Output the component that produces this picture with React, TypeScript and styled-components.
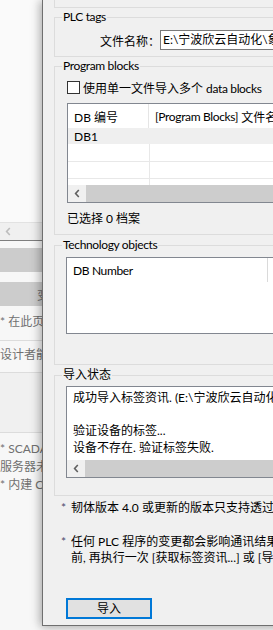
import styled, { createGlobalStyle } from 'styled-components';

const GlobalStyle = createGlobalStyle`
  html,
  body {
    margin: 0;
    overflow: hidden;
    background: #f7f7f7;
  }
  body {
    font-family: Lato, 'Noto Sans CJK SC', sans-serif;
    font-size: 12px;
    color: #000;
  }
`;

const Page = styled.div`
  display: flex;
  width: 273px;
  height: 630px;
  overflow: hidden;
`;

/* tighter tracking for runs of latin text */
const Latin = styled.span`
  letter-spacing: -0.35px;
`;

/* window behind the dialog */
const BackWindow = styled.div`
  width: 42px;
  flex-shrink: 0;
  display: flex;
  flex-direction: column;
  overflow: hidden;
  white-space: nowrap;
  color: #707070;
`;

const BackList = styled.div`
  height: 222px;
  flex-shrink: 0;
  background: #fafafa;
  border-bottom: 1px solid #e2e2e2;
`;

const BackScroll = styled.div`
  height: 17px;
  flex-shrink: 0;
  display: flex;
  align-items: center;
  padding-left: 5px;
  background: #f0f0f0;
  border-bottom: 1px solid #7e7e7e;
`;

const BackButton = styled.div<{ $mt: number }>`
  height: 24px;
  flex-shrink: 0;
  margin-top: ${({ $mt }) => $mt}px;
  display: flex;
  align-items: center;
  justify-content: flex-end;
  background: #cccccc;
  color: #6a6a6a;
  > span {
    margin-right: -7px;
  }
`;

const BackLine = styled.div<{ $mt: number; $h: number }>`
  height: ${({ $h }) => $h}px;
  flex-shrink: 0;
  margin-top: ${({ $mt }) => $mt}px;
  line-height: ${({ $h }) => $h}px;
`;

const BackRule = styled.div<{ $mt: number }>`
  height: 1px;
  flex-shrink: 0;
  margin-top: ${({ $mt }) => $mt}px;
  background: #dcdcdc;
`;

const BackPanel = styled.div`
  height: 59px;
  flex-shrink: 0;
  background: #f0f0f0;
`;

/* the import dialog */
const Dialog = styled.div`
  position: relative;
  z-index: 1;
  width: 480px;
  height: 626px;
  flex-shrink: 0;
  box-sizing: border-box;
  display: flex;
  flex-direction: column;
  padding-left: 11px;
  background: #f0f0f0;
  border-left: 1px solid #6f6f6f;
  border-bottom: 1px solid #6f6f6f;
  box-shadow: -3px 0 9px rgba(0, 0, 0, 0.22), 0 3px 8px rgba(0, 0, 0, 0.12);
  white-space: nowrap;
`;

const TopGroup = styled.div`
  width: 440px;
  height: 8px;
  flex-shrink: 0;
  box-sizing: border-box;
  border: 1px solid #dcdcdc;
  border-top: none;
`;

const Group = styled.section<{ $mt: number; $h: number }>`
  width: 440px;
  height: ${({ $h }) => $h}px;
  margin-top: ${({ $mt }) => $mt}px;
  flex-shrink: 0;
  box-sizing: border-box;
  display: flex;
  flex-direction: column;
  border: 1px solid #dcdcdc;
`;

const GroupTitle = styled.div`
  align-self: flex-start;
  height: 14px;
  line-height: 14px;
  margin: -8px 0 -6px 7px;
  padding: 0 1px;
  background: #f0f0f0;
`;

const FieldRow = styled.div`
  display: flex;
  align-items: center;
  padding: 12px 0 0 45px;
`;

const FieldLabel = styled.span`
  width: 60px;
  flex-shrink: 0;
`;

const TextInput = styled.div`
  width: 300px;
  height: 20px;
  box-sizing: border-box;
  padding-left: 2px;
  line-height: 18px;
  background: #fff;
  border: 1px solid #7a7a7a;
`;

const CheckRow = styled.label`
  display: flex;
  align-items: center;
  height: 13px;
  margin: 14px 0 0 12px;
`;

const CheckBox = styled.span`
  width: 13px;
  height: 13px;
  box-sizing: border-box;
  flex-shrink: 0;
  margin-right: 3px;
  background: #fff;
  border: 1px solid #333;
`;

const ListBox = styled.div<{ $mt: number; $ml: number; $h: number }>`
  width: 400px;
  height: ${({ $h }) => $h}px;
  margin: ${({ $mt, $ml }) => `${$mt}px 0 0 ${$ml}px`};
  flex-shrink: 0;
  box-sizing: border-box;
  display: flex;
  flex-direction: column;
  background: #fff;
  border: 1px solid #828790;
  overflow: hidden;
`;

const Rows = styled.div`
  flex: 1;
  overflow: hidden;
`;

const Row = styled.div<{ $h: number; $bg?: string; $line?: boolean }>`
  display: flex;
  height: ${({ $h }) => $h}px;
  box-sizing: border-box;
  background: ${({ $bg }) => $bg || '#fff'};
  border-bottom: ${({ $line }) => ($line ? '1px solid #e8e8e8' : 'none')};
`;

const Cell = styled.div<{ $w: number; $divider?: string }>`
  width: ${({ $w }) => $w}px;
  flex-shrink: 0;
  box-sizing: border-box;
  display: flex;
  align-items: center;
  padding-left: 6px;
  border-right: ${({ $divider }) => ($divider ? `1px solid ${$divider}` : 'none')};
`;

const HScroll = styled.div`
  height: 17px;
  flex-shrink: 0;
  display: flex;
  background: #f0f0f0;
`;

const ArrowButton = styled.div`
  width: 18px;
  flex-shrink: 0;
  display: flex;
  align-items: center;
  justify-content: center;
`;

const Thumb = styled.div`
  flex: 1;
  background: #cdcdcd;
`;

const Caption = styled.div`
  height: 16px;
  line-height: 16px;
  margin: 8px 0 0 12px;
`;

const StatusText = styled.div`
  flex: 1;
  padding: 3px 0 0 6px;
  line-height: 16.5px;
`;

const Note = styled.div<{ $mt: number }>`
  display: flex;
  margin-top: ${({ $mt }) => $mt}px;
  padding-left: 7px;
  line-height: 16px;
`;

const Star = styled.span`
  width: 10px;
  flex-shrink: 0;
  color: #4a4a6a;
`;

const ImportButton = styled.button`
  width: 86px;
  height: 21px;
  margin: 32px 0 0 12px;
  padding: 0;
  box-sizing: border-box;
  font: inherit;
  line-height: 17px;
  color: #000;
  background: #e1e1e1;
  border: 2px solid #0078d7;
  border-radius: 0;
`;

const Chevron = ({ color }: { color: string }) => (
  <svg width="6" height="9" viewBox="0 0 6 9">
    <path d="M4.8 1 L1.6 4.5 L4.8 8" fill="none" stroke={color} strokeWidth="1.6" />
  </svg>
);

const ScrollBar = () => (
  <HScroll>
    <ArrowButton>
      <Chevron color="#606060" />
    </ArrowButton>
    <Thumb />
  </HScroll>
);

export default function App() {
  return (
    <Page>
      <GlobalStyle />
      <BackWindow>
        <BackList />
        <BackScroll>
          <Chevron color="#bdbdbd" />
        </BackScroll>
        <BackButton $mt={7} />
        <BackButton $mt={10}>
          <span>变</span>
        </BackButton>
        <BackLine $mt={8} $h={16}>* 在此页</BackLine>
        <BackRule $mt={10} />
        <BackLine $mt={6} $h={16}>设计者能</BackLine>
        <BackRule $mt={9} />
        <BackPanel />
        <BackRule $mt={0} />
        <BackLine $mt={7} $h={18}>* SCADA</BackLine>
        <BackLine $mt={0} $h={18}>服务器未</BackLine>
        <BackLine $mt={0} $h={18}>* 内建 C</BackLine>
      </BackWindow>

      <Dialog>
        <TopGroup />

        <Group $mt={9} $h={40}>
          <GroupTitle>
            <Latin>PLC tags</Latin>
          </GroupTitle>
          <FieldRow>
            <FieldLabel>文件名称：</FieldLabel>
            <TextInput>E:\宁波欣云自动化\象山项目\PLC\tags.xml</TextInput>
          </FieldRow>
        </Group>

        <Group $mt={9} $h={169}>
          <GroupTitle>
            <Latin>Program blocks</Latin>
          </GroupTitle>
          <CheckRow>
            <CheckBox />
            <span>
              使用单一文件导入多个 <Latin>data blocks</Latin>
            </span>
          </CheckRow>
          <ListBox $mt={9} $ml={12} $h={100}>
            <Rows>
              <Row $h={24}>
                <Cell $w={81} $divider="#e5e5e5">DB 编号</Cell>
                <Cell $w={300}>
                  <Latin>[Program Blocks]</Latin>&nbsp;文件名称
                </Cell>
              </Row>
              <Row $h={16} $bg="#efefef">
                <Cell $w={81}>DB1</Cell>
              </Row>
              <Row $h={18} $line>
                <Cell $w={82} $divider="#e8e8e8" />
              </Row>
              <Row $h={17} $line>
                <Cell $w={82} $divider="#e8e8e8" />
              </Row>
              <Row $h={17}>
                <Cell $w={82} $divider="#e8e8e8" />
              </Row>
            </Rows>
            <ScrollBar />
          </ListBox>
          <Caption>已选择 0 档案</Caption>
        </Group>

        <Group $mt={10} $h={120}>
          <GroupTitle>
            <Latin>Technology objects</Latin>
          </GroupTitle>
          <ListBox $mt={11} $ml={11} $h={77}>
            <Row $h={24}>
              <Cell $w={201} $divider="#dadada">
                <Latin>DB Number</Latin>
              </Cell>
            </Row>
          </ListBox>
        </Group>

        <Group $mt={10} $h={121}>
          <GroupTitle>导入状态</GroupTitle>
          <ListBox $mt={10} $ml={11} $h={92}>
            <StatusText>
              <div>成功导入标签资讯. (E:\宁波欣云自动化\象山项目\PLC\tags.xml)</div>
              <div>&nbsp;</div>
              <div>验证设备的标签...</div>
              <div>设备不存在. 验证标签失败.</div>
            </StatusText>
            <ScrollBar />
          </ListBox>
        </Group>

        <Note $mt={4}>
          <Star>*</Star>
          <span>韧体版本 4.0 或更新的版本只支持透过符号名称访问</span>
        </Note>
        <Note $mt={18}>
          <Star>*</Star>
          <span>
            任何 PLC 程序的变更都会影响通讯结果, 请在连接
            <br />
            前, 再执行一次 [获取标签资讯...] 或 [导入]
          </span>
        </Note>

        <ImportButton>导入</ImportButton>
      </Dialog>
    </Page>
  );
}
